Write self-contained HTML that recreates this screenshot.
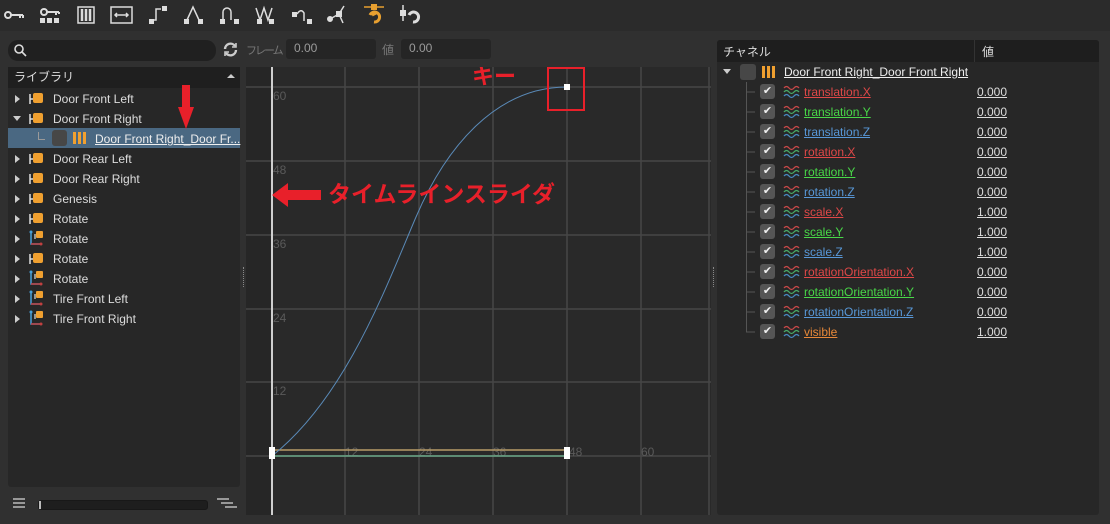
<!DOCTYPE html>
<html><head><meta charset="utf-8"><style>
*{margin:0;padding:0;box-sizing:border-box}
body{width:1110px;height:524px;background:#303030;font-family:"Liberation Sans","Noto Sans CJK JP",sans-serif;font-size:12px;color:#ddd;position:relative;overflow:hidden}
.abs{position:absolute}
.tb{left:0;top:0;width:1110px;height:31px;background:#2b2b2b}
.in{background:#252525;border-radius:3px;color:#9a9a9a;padding-left:8px;line-height:19px}
.row{position:absolute;height:20px;line-height:20px;white-space:nowrap}
.tri{position:absolute;width:0;height:0;border-left:5px solid #ccc;border-top:4px solid transparent;border-bottom:4px solid transparent}
.trid{position:absolute;width:0;height:0;border-top:5px solid #ccc;border-left:4px solid transparent;border-right:4px solid transparent}
.ch{position:absolute;width:15px;height:15px;background:#555;border-radius:3px;color:#eee;font-size:11px;line-height:15px;text-align:center}
u{text-decoration:underline}
</style></head><body>
<div class="abs tb"></div>
<svg class="abs" style="left:0;top:0" width="440" height="31" fill="none" stroke="#ddd" stroke-width="2">
<circle cx="8" cy="15" r="3" /><path d="M11 15h12M20 15v3M23 15v3"/>
<circle cx="44" cy="12" r="3"/><path d="M47 12h12M56 12v3M59 12v2"/><g fill="#ddd" stroke="none"><rect x="40" y="18" width="5" height="5"/><rect x="47" y="18" width="5" height="5"/><rect x="54" y="18" width="5" height="5"/></g>
<rect x="78" y="7" width="16" height="16" stroke-width="1.5"/><path d="M82 9v12M86 9v12M90 9v12" stroke-width="2.5"/>
<rect x="111" y="7" width="21" height="16" stroke-width="1.5"/><path d="M115 15h13M117 13l-2 2 2 2M126 13l2 2-2 2" stroke-width="1.5"/>
<path d="M153 20h3v-11h5" stroke-width="1.5"/><rect x="149" y="19" width="5" height="5" fill="#ddd" stroke="none"/><rect x="162" y="6" width="5" height="5" fill="#ddd" stroke="none"/>
<path d="M187 20l6-13 6 13" stroke-width="1.5"/><rect x="184" y="19" width="5" height="5" fill="#ddd" stroke="none"/><rect x="198" y="19" width="5" height="5" fill="#ddd" stroke="none"/>
<path d="M223 20v-8a4 4 0 0 1 8 0v8" stroke-width="1.5"/><rect x="220" y="19" width="5" height="5" fill="#ddd" stroke="none"/><rect x="234" y="19" width="5" height="5" fill="#ddd" stroke="none"/>
<path d="M256 8l4 12 4-12 4 12 4-12" stroke-width="1.5"/><rect x="257" y="19" width="5" height="5" fill="#ddd" stroke="none"/><rect x="269" y="19" width="5" height="5" fill="#ddd" stroke="none"/>
<path d="M297 14q4-6 7-1v8" stroke-width="1.5"/><rect x="292" y="12" width="5" height="5" fill="#ddd" stroke="none"/><rect x="307" y="19" width="5" height="5" fill="#ddd" stroke="none"/>
<path d="M330 19l9-5 5-8M339 14l4 9" stroke-width="1.5"/><rect x="336" y="11" width="6" height="6" fill="#ddd" stroke="none"/><circle cx="330" cy="19" r="2" fill="#ddd"/>
<path d="M364 7h20" stroke="#e8a030" stroke-width="1.5"/><rect x="371" y="4" width="6" height="6" fill="#e8a030" stroke="none"/><path d="M370 15a5 5 0 1 1 4 7M376 13l-4 2" stroke="#e8a030" stroke-width="3"/>
<path d="M403 5v16" stroke-width="1.5"/><rect x="400" y="10" width="6" height="6" fill="#ddd" stroke="none"/><path d="M409 15a5 5 0 1 1 4 7" stroke-width="3"/>
</svg>

<div class="abs" style="left:8px;top:40px;width:208px;height:21px;background:#202020;border-radius:10px"></div>
<svg class="abs" style="left:13px;top:43px" width="14" height="14" fill="none" stroke="#ddd" stroke-width="1.6"><circle cx="6" cy="6" r="4"/><path d="M9 9l4 4"/></svg>
<svg class="abs" style="left:222px;top:41px" width="17" height="17" fill="none" stroke="#ccc" stroke-width="2.4"><path d="M3 8a5.5 5.5 0 0 1 10-3M14 9a5.5 5.5 0 0 1-10 3"/><path d="M14 2v4h-4M3 15v-4h4" stroke-width="1.6"/></svg>
<div class="abs" style="left:246px;top:42px;color:#777;font-size:11px;letter-spacing:-2px">フレーム</div>
<div class="abs in" style="left:286px;top:39px;width:90px;height:20px">0.00</div>
<div class="abs" style="left:382px;top:41px;color:#777">値</div>
<div class="abs in" style="left:401px;top:39px;width:90px;height:20px">0.00</div>

<div class="abs" style="left:8px;top:67px;width:232px;height:420px;background:#272727;border-radius:0 0 3px 3px"></div>
<div class="abs" style="left:8px;top:67px;width:232px;height:21px;background:#1f1f1f;line-height:21px;padding-left:6px;color:#ddd">ライブラリ</div>
<div class="abs" style="left:227px;top:74px;border-bottom:4px solid #ccc;border-left:4px solid transparent;border-right:4px solid transparent;width:0"></div>
<div class="abs" style="left:8px;top:128px;width:232px;height:20px;background:#4a6882"></div>

<svg class="abs" style="left:28px;top:88px" width="30" height="240">
<defs>
<g id="fold"><path d="M2 6v10M2 11h3" stroke="#ddd" stroke-width="1.5"/><rect x="5" y="5" width="10" height="10" rx="2" fill="#f0a030"/></g>
<g id="jnt"><path d="M3 5v11h10" stroke="#4a9fd8" stroke-width="1.5" fill="none"/><path d="M3 16h10" stroke="#c04040" stroke-width="1.5"/><circle cx="3" cy="4" r="1.5" fill="#4a9fd8"/><circle cx="13" cy="16" r="1.5" fill="#c04040"/><path d="M7 6v5" stroke="#ddd" stroke-width="1.2"/><rect x="8" y="3" width="7" height="7" rx="1" fill="#f0a030"/></g>
</defs>
<use href="#fold" y="0"/><use href="#fold" y="20"/><use href="#fold" y="60"/><use href="#fold" y="80"/><use href="#fold" y="100"/><use href="#fold" y="120"/>
<use href="#jnt" y="140"/><use href="#fold" y="160"/><use href="#jnt" y="180"/><use href="#jnt" y="200"/><use href="#jnt" y="220"/>
</svg>
<div class="tri" style="left:15px;top:95px"></div>
<div class="trid" style="left:13px;top:116px"></div>
<div class="tri" style="left:15px;top:155px"></div><div class="tri" style="left:15px;top:175px"></div><div class="tri" style="left:15px;top:195px"></div><div class="tri" style="left:15px;top:215px"></div><div class="tri" style="left:15px;top:235px"></div><div class="tri" style="left:15px;top:255px"></div><div class="tri" style="left:15px;top:275px"></div><div class="tri" style="left:15px;top:295px"></div><div class="tri" style="left:15px;top:315px"></div>
<div class="row" style="left:53px;top:89px">Door Front Left</div>
<div class="row" style="left:53px;top:109px">Door Front Right</div>
<div class="abs" style="left:38px;top:132px;width:7px;height:8px;border-left:1px solid #999;border-bottom:1px solid #999"></div>
<div class="abs" style="left:52px;top:130px;width:15px;height:16px;background:#474747;border-radius:3px"></div>
<div class="abs" style="left:73px;top:132px;width:14px;height:12px;background:repeating-linear-gradient(90deg,#f0a030 0 3px,transparent 3px 5px)"></div>
<div class="row" style="left:95px;top:129px;color:#eee"><u>Door Front Right_Door Fr...</u></div>
<div class="row" style="left:53px;top:149px">Door Rear Left</div>
<div class="row" style="left:53px;top:169px">Door Rear Right</div>
<div class="row" style="left:53px;top:189px">Genesis</div>
<div class="row" style="left:53px;top:209px">Rotate</div>
<div class="row" style="left:53px;top:229px">Rotate</div>
<div class="row" style="left:53px;top:249px">Rotate</div>
<div class="row" style="left:53px;top:269px">Rotate</div>
<div class="row" style="left:53px;top:289px">Tire Front Left</div>
<div class="row" style="left:53px;top:309px">Tire Front Right</div>
<svg class="abs" style="left:176px;top:85px" width="20" height="46"><rect x="6" y="0" width="8" height="26" fill="#e8202a"/><path d="M2 22h16l-8 22z" fill="#e8202a"/></svg>

<svg class="abs" style="left:10px;top:496px" width="230" height="16"><path d="M3 3h12M3 7h12M3 11h12" stroke="#bbb" stroke-width="1.6"/><path d="M207 3h12M211 7h12M215 11h12" stroke="#bbb" stroke-width="1.6"/></svg>
<div class="abs" style="left:38px;top:500px;width:170px;height:10px;background:#1e1e1e;border-radius:3px;border:1px solid #181818"></div>
<div class="abs" style="left:39px;top:501px;width:2px;height:8px;background:#bbb"></div>

<div class="abs" style="left:243px;top:267px;width:1px;height:20px;border-left:1px dotted #888"></div>
<div class="abs" style="left:713px;top:267px;width:1px;height:20px;border-left:1px dotted #888"></div>

<svg class="abs" style="left:246px;top:67px" width="465" height="448">
<rect width="465" height="448" fill="#292929"/>
<rect x="0" width="26" height="448" fill="#262626"/>
<g stroke="#474747" stroke-width="1.5">
<path d="M99 0v448M173 0v448M247 0v448M321 0v448M395 0v448M463 0v448"/>
<path d="M0 20h465M0 94h465M0 168h465M0 242h465M0 315h465M0 389h465"/>
</g>
<g fill="#5a5a5a" font-size="12" font-family="Liberation Sans,sans-serif">
<text x="27" y="33">60</text><text x="27" y="107">48</text><text x="27" y="181">36</text><text x="27" y="255">24</text><text x="27" y="328">12</text>
<text x="99" y="389">12</text><text x="173" y="389">24</text><text x="247" y="389">36</text><text x="323" y="389">48</text><text x="395" y="389">60</text>
</g>
<path d="M26 383h295" stroke="#b79c68" stroke-width="1.5"/>
<path d="M26 389h295" stroke="#6aa888" stroke-width="1.5"/>
<path d="M26 389C100 330 140 220 170 150S250 20 321 20" stroke="#5a8ab8" stroke-width="1" fill="none"/>
<path d="M26 0v448" stroke="#cfcfcf" stroke-width="2"/>
<rect x="23" y="380" width="6" height="12" fill="#fff"/>
<rect x="318" y="380" width="6" height="12" fill="#fff"/>
<rect x="318" y="17" width="6" height="6" fill="#fff"/>
<rect x="302" y="1" width="36" height="42" fill="none" stroke="#e8202a" stroke-width="2"/>
<text x="226" y="17" fill="#e8202a" font-size="22" font-weight="bold" font-family="Liberation Sans,Noto Sans CJK JP,sans-serif">キー</text>
<path d="M26 128l16-12v7h33v10h-33v7z" fill="#e8202a"/>
<text x="82" y="135" fill="#e8202a" font-size="23" font-weight="bold" font-family="Liberation Sans,Noto Sans CJK JP,sans-serif">タイムラインスライダ</text>
</svg>

<div class="abs" style="left:717px;top:40px;width:382px;height:475px;background:#272727;border-radius:3px"></div>
<div class="abs" style="left:717px;top:40px;width:382px;height:22px;background:#1e1e1e;border-radius:3px 3px 0 0"></div>
<div class="abs" style="left:974px;top:40px;width:1px;height:22px;background:#333"></div>
<div class="abs" style="left:723px;top:43px">チャネル</div>
<div class="abs" style="left:982px;top:43px">値</div>
<div class="trid" style="left:723px;top:69px"></div>
<div class="abs" style="left:740px;top:64px;width:16px;height:16px;background:#474747;border-radius:3px"></div>
<div class="abs" style="left:762px;top:66px;width:14px;height:12px;background:repeating-linear-gradient(90deg,#f0a030 0 3px,transparent 3px 5px)"></div>
<div class="row" style="left:784px;top:62px;color:#eee"><u>Door Front Right_Door Front Right</u></div>
<div class="abs" style="left:746px;top:82px;width:1px;height:250px;background:#555"></div>
<svg class="abs" style="left:746px;top:82px" width="60" height="260">
<g stroke="#555"><path d="M0 10h9M0 30h9M0 50h9M0 70h9M0 90h9M0 110h9M0 130h9M0 150h9M0 170h9M0 190h9M0 210h9M0 230h9M0 250h9"/></g>
<g fill="none" stroke-width="1.3" id="w">
<path d="M38 6q2.5-3 5 0t5 0t5 0" stroke="#c84848"/><path d="M38 10q2.5-3 5 0t5 0t5 0" stroke="#48a868"/><path d="M38 14q2.5-3 5 0t5 0t5 0" stroke="#4888c0"/>
</g>
<use href="#w" y="20"/><use href="#w" y="40"/><use href="#w" y="60"/><use href="#w" y="80"/><use href="#w" y="100"/><use href="#w" y="120"/><use href="#w" y="140"/><use href="#w" y="160"/><use href="#w" y="180"/><use href="#w" y="200"/><use href="#w" y="220"/><use href="#w" y="240"/>
</svg>
<div class="ch" style="left:760px;top:84px">✔</div><div class="ch" style="left:760px;top:104px">✔</div><div class="ch" style="left:760px;top:124px">✔</div><div class="ch" style="left:760px;top:144px">✔</div><div class="ch" style="left:760px;top:164px">✔</div><div class="ch" style="left:760px;top:184px">✔</div><div class="ch" style="left:760px;top:204px">✔</div><div class="ch" style="left:760px;top:224px">✔</div><div class="ch" style="left:760px;top:244px">✔</div><div class="ch" style="left:760px;top:264px">✔</div><div class="ch" style="left:760px;top:284px">✔</div><div class="ch" style="left:760px;top:304px">✔</div><div class="ch" style="left:760px;top:324px">✔</div>
<div class="row" style="left:804px;top:82px;color:#e04848"><u>translation.X</u></div>
<div class="row" style="left:804px;top:102px;color:#48d848"><u>translation.Y</u></div>
<div class="row" style="left:804px;top:122px;color:#5898d8"><u>translation.Z</u></div>
<div class="row" style="left:804px;top:142px;color:#e04848"><u>rotation.X</u></div>
<div class="row" style="left:804px;top:162px;color:#48d848"><u>rotation.Y</u></div>
<div class="row" style="left:804px;top:182px;color:#5898d8"><u>rotation.Z</u></div>
<div class="row" style="left:804px;top:202px;color:#e04848"><u>scale.X</u></div>
<div class="row" style="left:804px;top:222px;color:#48d848"><u>scale.Y</u></div>
<div class="row" style="left:804px;top:242px;color:#5898d8"><u>scale.Z</u></div>
<div class="row" style="left:804px;top:262px;color:#e04848"><u>rotationOrientation.X</u></div>
<div class="row" style="left:804px;top:282px;color:#48d848"><u>rotationOrientation.Y</u></div>
<div class="row" style="left:804px;top:302px;color:#5898d8"><u>rotationOrientation.Z</u></div>
<div class="row" style="left:804px;top:322px;color:#e88838"><u>visible</u></div>
<div class="row" style="left:977px;top:82px"><u>0.000</u></div>
<div class="row" style="left:977px;top:102px"><u>0.000</u></div>
<div class="row" style="left:977px;top:122px"><u>0.000</u></div>
<div class="row" style="left:977px;top:142px"><u>0.000</u></div>
<div class="row" style="left:977px;top:162px"><u>0.000</u></div>
<div class="row" style="left:977px;top:182px"><u>0.000</u></div>
<div class="row" style="left:977px;top:202px"><u>1.000</u></div>
<div class="row" style="left:977px;top:222px"><u>1.000</u></div>
<div class="row" style="left:977px;top:242px"><u>1.000</u></div>
<div class="row" style="left:977px;top:262px"><u>0.000</u></div>
<div class="row" style="left:977px;top:282px"><u>0.000</u></div>
<div class="row" style="left:977px;top:302px"><u>0.000</u></div>
<div class="row" style="left:977px;top:322px"><u>1.000</u></div>
</body></html>
